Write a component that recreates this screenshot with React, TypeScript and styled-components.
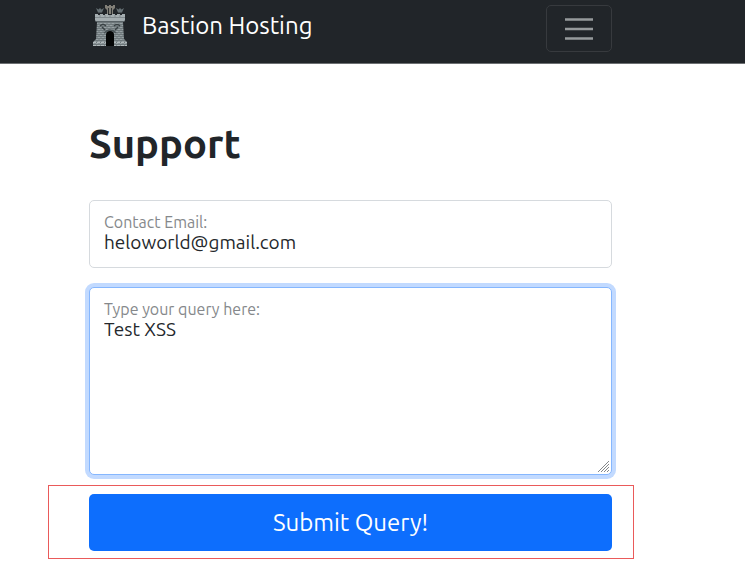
import React, { useState } from "react";
import styled, { createGlobalStyle, css } from "styled-components";

const GlobalStyle = createGlobalStyle`
  *, *::before, *::after { box-sizing: border-box; }
  body {
    margin: 0;
    background: #fff;
    color: #212529;
    font-family: Ubuntu, "Noto Sans", "Open Sans", sans-serif;
  }
`;

const gutter = css`
  padding-left: 89px;
  padding-right: 133px;
`;

const Navbar = styled.header`
  ${gutter}
  display: flex;
  align-items: center;
  justify-content: space-between;
  padding-top: 5px;
  padding-bottom: 11px;
  background: #212529;
  border-bottom: 1px solid #6c6f72;
`;

const Brand = styled.a`
  display: flex;
  align-items: flex-start;
  gap: 12px;
  padding: 0 0 5px 3px;
  color: #fff;
  font-size: 24px;
  line-height: 42px;
  text-decoration: none;
`;

const BrandLogo = styled.svg`
  display: block;
  width: 38px;
  height: 42px;
`;

const Toggler = styled.button`
  display: flex;
  align-items: center;
  justify-content: center;
  width: 66px;
  height: 47px;
  padding: 0;
  background: transparent;
  border: 1px solid #373a3e;
  border-radius: 5px;
  cursor: pointer;
`;

const Main = styled.main`
  ${gutter}
  padding-top: 53px;
  padding-bottom: 24px;
`;

const Title = styled.h1`
  margin: 0 0 30px;
  font-size: 40px;
  font-weight: 700;
  line-height: 53px;
`;

const Form = styled.form`
  display: flex;
  flex-direction: column;
  gap: 19px;
`;

const Field = styled.div<{ $active?: boolean }>`
  position: relative;
  display: flex;
  flex-direction: column;
  padding: 12px 14px 14px;
  background: #fff;
  border: 1px solid ${(p) => (p.$active ? "#86b7fe" : "#d6dade")};
  border-radius: 5px;
  box-shadow: ${(p) => (p.$active ? "0 0 0 4px #c2daff" : "none")};
`;

const Label = styled.label`
  color: #85888b;
  font-size: 16px;
  line-height: 18px;
`;

const inputText = css`
  display: block;
  width: 100%;
  margin: 0;
  padding: 0;
  border: 0;
  outline: 0;
  background: transparent;
  color: #24282c;
  font-family: inherit;
  font-size: 19px;
  line-height: 22px;
`;

const TextInput = styled.input`
  ${inputText}
  height: 22px;
`;

const TextArea = styled.textarea`
  ${inputText}
  height: 142px;
  resize: none;
`;

const Grip = styled.svg`
  position: absolute;
  right: 1px;
  bottom: 1px;
  width: 13px;
  height: 13px;
`;

const Highlight = styled.div`
  position: relative;

  &::before {
    content: "";
    position: absolute;
    inset: -9px -22px -8px -41px;
    border: 1px solid #ea5a5a;
    pointer-events: none;
  }
`;

const SubmitButton = styled.button`
  position: relative;
  display: block;
  width: 100%;
  height: 57px;
  padding: 0;
  background: #0d6efd;
  border: 0;
  border-radius: 5px;
  color: #fff;
  font-family: inherit;
  font-size: 24px;
  line-height: 34px;
  cursor: pointer;
`;

function CastleLogo() {
  return (
    <BrandLogo viewBox="0 1 38 42" aria-hidden="true">
      <defs>
        <pattern id="stone" width="4" height="4" patternUnits="userSpaceOnUse">
          <rect width="4" height="4" fill="#98a1a4" />
          <path d="M0 .5H4M0 2.5H4M1 .5V2.5M3 2.5V4" stroke="#5f686b" strokeWidth=".7" />
        </pattern>
      </defs>
      <path d="M4 4l2.500 1.500L8 4l1.500 1.500L12 4l-2 4.500H6zM24 4l2.500 1.500L28 4l1.500 1.500L32 4l-2 4.500h-4z" fill="#667074" />
      <path d="M13 1h2v1h2V1h2v1h2V1h2v3l-2 2v4h-6V6l-2-2z" fill="#817f78" />
      <path d="M16.500 4v6M19.500 4v6" stroke="#2d3133" />
      <path d="M6 8.500h4M26 8.500h4" stroke="#495054" />
      <path d="M3 10h3v1h2v-1h3v1h2v-1h3v1h4v-1h3v1h2v-1h3v1h2v-1h3v6l-1 2H4l-1-2z" fill="#a4adb0" />
      <path d="M3 13.500h30M8 11v2M13 11v2M18 11v2M23 11v2M28 11v2" stroke="#788185" strokeWidth=".8" />
      <path d="M5 18h26l1 17 3 3v4H1v-4l3-3z" fill="url(#stone)" />
      <path d="M4 17.500h28" stroke="#596266" />
      <path d="M8 22q3-3 6 0M22 22q3-3 6 0M10 23l3 3M26 23l-3 3" stroke="#394144" strokeWidth="1.500" fill="none" />
      <path d="M12 29q6-6 12 0" stroke="#4b5457" strokeWidth="1.500" fill="none" />
      <path d="M1 38.500h34M1 41.500h34" stroke="#b0b8ba" strokeDasharray="3 1" />
      <path d="M14 42V31q0-4 4-4t4 4v11z" fill="#050606" />
    </BrandLogo>
  );
}

export default function App() {
  const [email, setEmail] = useState("heloworld@gmail.com");
  const [query, setQuery] = useState("Test XSS");

  return (
    <>
      <GlobalStyle />
      <Navbar>
        <Brand href="#">
          <CastleLogo />
          Bastion Hosting
        </Brand>
        <Toggler type="button" aria-label="Toggle navigation">
          <svg width="30" height="24" viewBox="0 0 30 24" aria-hidden="true">
            <path d="M1 2.500h28M1 12h28M1 21.500h28" stroke="#969a9c" strokeWidth="2.400" />
          </svg>
        </Toggler>
      </Navbar>
      <Main>
        <Title>Support</Title>
        <Form onSubmit={(e) => e.preventDefault()}>
          <Field>
            <Label htmlFor="email">Contact Email:</Label>
            <TextInput id="email" type="email" value={email} onChange={(e) => setEmail(e.target.value)} />
          </Field>
          <Field $active>
            <Label htmlFor="query">Type your query here:</Label>
            <TextArea id="query" value={query} onChange={(e) => setQuery(e.target.value)} />
            <Grip viewBox="0 0 13 13" aria-hidden="true">
              <path d="M1 12L12 1M4 12l8-8M7 12l5-5M10 12l2-2" stroke="#85888a" fill="none" />
            </Grip>
          </Field>
          <Highlight>
            <SubmitButton type="submit">Submit Query!</SubmitButton>
          </Highlight>
        </Form>
      </Main>
    </>
  );
}
